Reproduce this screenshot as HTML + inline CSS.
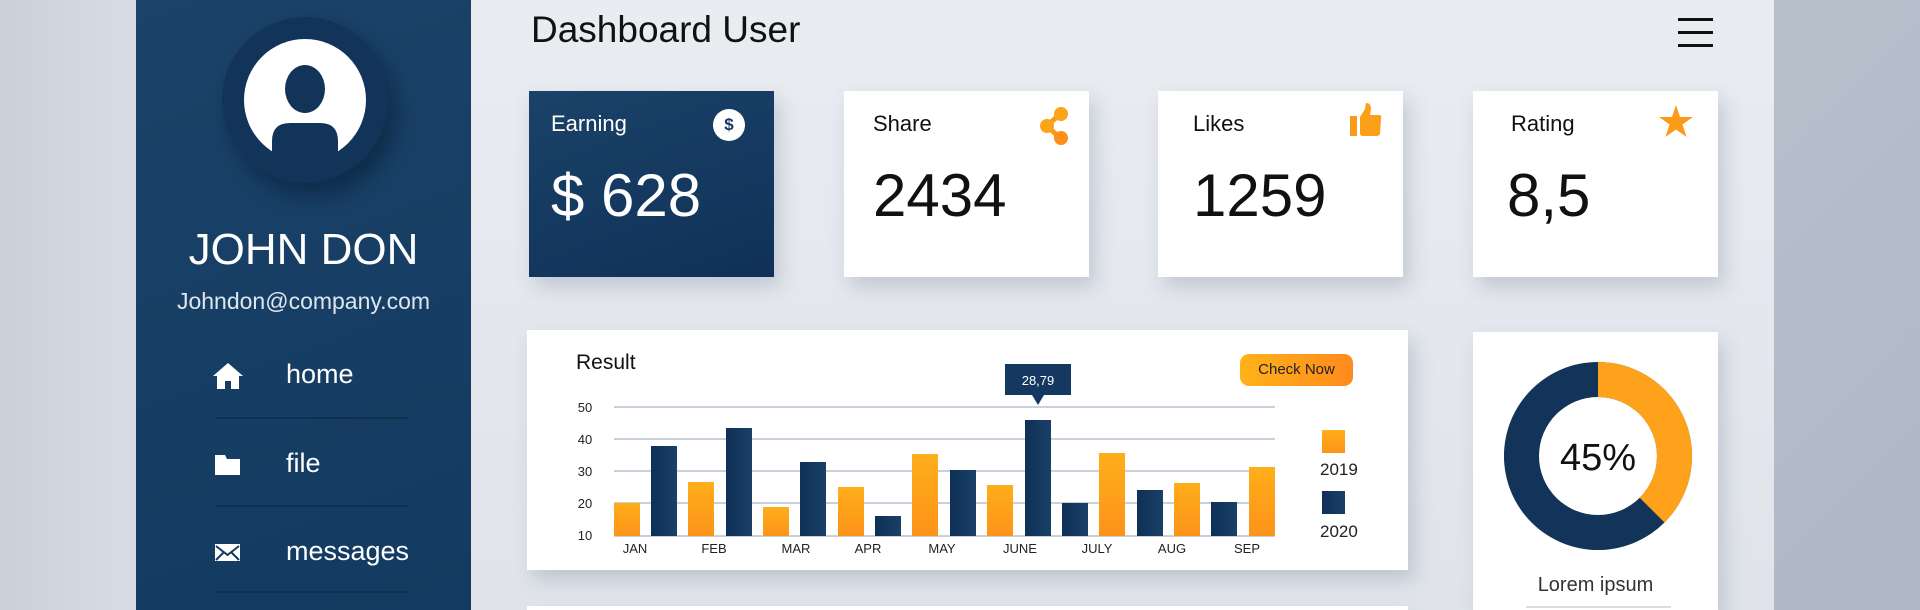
<!DOCTYPE html>
<html style="width:1920px;height:610px;overflow:hidden"><head><meta charset="utf-8"><style>
*{margin:0;padding:0;box-sizing:border-box}
body{width:1920px;height:610px;overflow:hidden;position:relative;background:#e6e9ef;font-family:"Liberation Sans",sans-serif;}
.a{position:absolute}
.card{position:absolute;background:#fff;box-shadow:6px 10px 18px rgba(90,105,130,.25)}
.lbl{position:absolute;font-size:22px;color:#111}
.num{position:absolute;font-size:60px;color:#111;line-height:1}
.nav{position:absolute;left:286px;font-size:27px;color:#fff;line-height:1}
.sep{position:absolute;left:215px;width:193px;height:2px;background:#10304f}
</style></head><body>
<div class="a" style="left:0;top:0;width:136px;height:610px;background:linear-gradient(90deg,#c9d0da,#d8dde5)"></div>
<div class="a" style="left:1774px;top:0;width:146px;height:610px;background:linear-gradient(135deg,#b7bfcb,#aeb8c6)"></div>
<div class="a" style="left:471px;top:0;width:1303px;height:610px;background:linear-gradient(180deg,#e9ecf1,#e0e4ea)"></div>
<!-- sidebar -->
<div class="a" style="left:136px;top:0;width:335px;height:610px;background:linear-gradient(160deg,#1b4268,#133a60)"></div>
<div class="a" style="left:222px;top:17px;width:166px;height:166px;border-radius:50%;background:#133459;box-shadow:8px 12px 20px rgba(5,20,40,.45)"></div>
<svg class="a" style="left:244px;top:39px" width="122" height="122" viewBox="0 0 122 122">
<circle cx="61" cy="61" r="61" fill="#fff"/>
<ellipse cx="61" cy="50" rx="20" ry="24" fill="#133459"/>
<path d="M28 122 V102 Q28 84 46 84 H76 Q94 84 94 102 V122 Z" fill="#133459"/>
</svg>
<div class="a" style="left:136px;width:335px;top:228px;text-align:center;color:#fff;font-size:44px;line-height:1">JOHN DON</div>
<div class="a" style="left:136px;width:335px;top:290px;text-align:center;color:#dfe6ee;font-size:23px;line-height:1">Johndon@company.com</div>
<svg class="a" style="left:212px;top:362px" width="32" height="28" viewBox="0 0 32 28"><path d="M16 1 L31 14 H27 V27 H19 V19 H13 V27 H5 V14 H1 Z" fill="#fff"/></svg>
<div class="nav" style="top:361px">home</div>
<div class="sep" style="top:417px"></div>
<svg class="a" style="left:215px;top:455px" width="25" height="20" viewBox="0 0 25 20"><path d="M0 0 H10 L12 4 H25 V20 H0 Z" fill="#fff"/></svg>
<div class="nav" style="top:450px">file</div>
<div class="sep" style="top:505px"></div>
<svg class="a" style="left:215px;top:544px" width="25" height="17" viewBox="0 0 25 17"><rect width="25" height="17" fill="#fff"/><path d="M1 2 L12.5 11 L24 2 M1 16 L9 8 M24 16 L16 8" stroke="#133a60" stroke-width="2" fill="none"/></svg>
<div class="nav" style="top:538px">messages</div>
<div class="sep" style="top:591px"></div>
<!-- header -->
<div class="a" style="left:531px;top:10px;font-size:37px;color:#111;line-height:1.1">Dashboard User</div>
<div class="a" style="left:1678px;top:18px;width:35px;height:3px;background:#111"></div>
<div class="a" style="left:1678px;top:31px;width:35px;height:3px;background:#111"></div>
<div class="a" style="left:1678px;top:44px;width:35px;height:3px;background:#111"></div>
<!-- cards -->
<div class="card" style="left:529px;top:91px;width:245px;height:186px;background:linear-gradient(160deg,#1b4268,#0f3158)"></div>
<div class="lbl" style="left:551px;top:111px;color:#fff">Earning</div>
<div class="a" style="left:713px;top:109px;width:32px;height:32px;border-radius:50%;background:#fff;color:#133a60;font-size:17px;font-weight:bold;text-align:center;line-height:32px">$</div>
<div class="num" style="left:551px;top:166px;color:#fff">$ 628</div>
<div class="card" style="left:844px;top:91px;width:245px;height:186px"></div>
<div class="lbl" style="left:873px;top:111px">Share</div>
<svg class="a" style="left:1040px;top:106px" width="30" height="40" viewBox="0 0 30 40"><path d="M20 8 L7 20 L20 32" stroke="#fb9a1a" stroke-width="5" fill="none"/><circle cx="21" cy="8" r="7" fill="#fda51a"/><circle cx="7" cy="20" r="7" fill="#fca31a"/><circle cx="21" cy="32" r="7" fill="#fb8f1a"/></svg>
<div class="num" style="left:873px;top:166px">2434</div>
<div class="card" style="left:1158px;top:91px;width:245px;height:186px"></div>
<div class="lbl" style="left:1193px;top:111px">Likes</div>
<svg class="a" style="left:1350px;top:103px" width="32" height="34" viewBox="0 0 32 34"><rect x="0" y="13" width="7" height="20" fill="#fb9a1a"/><path d="M10 14 L15 6 L16 0 Q21 0 21 6 L20 12 H29 Q32 12 31 16 L30 31 Q29 33 26 33 H13 Q10 33 10 30 Z" fill="#fca01a"/></svg>
<div class="num" style="left:1193px;top:166px">1259</div>
<div class="card" style="left:1473px;top:91px;width:245px;height:186px"></div>
<div class="lbl" style="left:1511px;top:111px">Rating</div>
<svg class="a" style="left:1659px;top:105px" width="34" height="33" viewBox="0 0 34 33"><path d="M17 0 L21 12 H34 L23.5 19.5 L27.5 32 L17 24.5 L6.5 32 L10.5 19.5 L0 12 H13 Z" fill="#fc9a1a"/></svg>
<div class="num" style="left:1507px;top:166px">8,5</div>
<!-- chart card -->
<div class="card" style="left:527px;top:330px;width:881px;height:240px"></div>
<div class="card" style="left:527px;top:606px;width:881px;height:4px"></div>
<div class="a" style="left:576px;top:351px;font-size:21px;color:#111">Result</div>
<div class="a" style="left:1240px;top:354px;width:113px;height:32px;border-radius:9px;background:linear-gradient(90deg,#ffb21a,#ff8a1c);font-size:15px;color:#222;text-align:center;line-height:32px">Check Now</div>
<svg class="a" style="left:527px;top:330px" width="881" height="240" viewBox="527 330 881 240">
<g stroke="#c8d0dc" stroke-width="2">
<line x1="614" y1="407" x2="1275" y2="407"/><line x1="614" y1="439" x2="1275" y2="439"/><line x1="614" y1="471" x2="1275" y2="471"/><line x1="614" y1="503" x2="1275" y2="503"/><line x1="614" y1="536" x2="1275" y2="536"/>
</g>
<g font-family="Liberation Sans, sans-serif" font-size="13" fill="#222" text-anchor="middle">
<text x="585" y="412">50</text><text x="585" y="444">40</text><text x="585" y="476">30</text><text x="585" y="508">20</text><text x="585" y="540">10</text>
<text x="635" y="553">JAN</text><text x="714" y="553">FEB</text><text x="796" y="553">MAR</text><text x="868" y="553">APR</text><text x="942" y="553">MAY</text><text x="1020" y="553">JUNE</text><text x="1097" y="553">JULY</text><text x="1172" y="553">AUG</text><text x="1247" y="553">SEP</text>
</g>
<defs><linearGradient id="o" x1="0" y1="0" x2="0" y2="1"><stop offset="0" stop-color="#ffae1a"/><stop offset="1" stop-color="#fd931a"/></linearGradient>
<linearGradient id="n" x1="0" y1="0" x2="1" y2="0"><stop offset="0" stop-color="#0f3056"/><stop offset="1" stop-color="#1a4068"/></linearGradient></defs>
<g>
<rect x="614" y="503" width="26" height="33" fill="url(#o)"/>
<rect x="651" y="446" width="26" height="90" fill="url(#n)"/>
<rect x="688" y="482" width="26" height="54" fill="url(#o)"/>
<rect x="726" y="428" width="26" height="108" fill="url(#n)"/>
<rect x="763" y="507" width="26" height="29" fill="url(#o)"/>
<rect x="800" y="462" width="26" height="74" fill="url(#n)"/>
<rect x="838" y="487" width="26" height="49" fill="url(#o)"/>
<rect x="875" y="516" width="26" height="20" fill="url(#n)"/>
<rect x="912" y="454" width="26" height="82" fill="url(#o)"/>
<rect x="950" y="470" width="26" height="66" fill="url(#n)"/>
<rect x="987" y="485" width="26" height="51" fill="url(#o)"/>
<rect x="1025" y="420" width="26" height="116" fill="url(#n)"/>
<rect x="1062" y="503" width="26" height="33" fill="url(#n)"/>
<rect x="1099" y="453" width="26" height="83" fill="url(#o)"/>
<rect x="1137" y="490" width="26" height="46" fill="url(#n)"/>
<rect x="1174" y="483" width="26" height="53" fill="url(#o)"/>
<rect x="1211" y="502" width="26" height="34" fill="url(#n)"/>
<rect x="1249" y="467" width="26" height="69" fill="url(#o)"/>
</g>
<path d="M1005 364 H1071 V395 H1044 L1038 405 L1032 395 H1005 Z" fill="#143860"/>
<text x="1038" y="385" font-family="Liberation Sans, sans-serif" font-size="13" fill="#fff" text-anchor="middle">28,79</text>
<rect x="1322" y="430" width="23" height="23" fill="url(#o)"/>
<rect x="1322" y="491" width="23" height="23" fill="url(#n)"/>
<g font-family="Liberation Sans, sans-serif" font-size="17" fill="#222"><text x="1320" y="475">2019</text><text x="1320" y="537">2020</text></g>
</svg>
<!-- donut card -->
<div class="card" style="left:1473px;top:332px;width:245px;height:278px"></div>
<svg class="a" style="left:1500px;top:358px" width="196" height="196" viewBox="-98 -98 196 196">
<path d="M0 -94 A94 94 0 1 1 0 94 A94 94 0 1 1 0 -94 Z M0 -59 A59 59 0 1 0 0 59 A59 59 0 1 0 0 -59 Z" fill="#123459" fill-rule="evenodd"/>
<path d="M0 -94 A94 94 0 0 1 66.5 66.5 L41.7 41.7 A59 59 0 0 0 0 -59 Z" fill="#fda21a"/>
<text x="0" y="14" text-anchor="middle" font-family="Liberation Sans, sans-serif" font-size="38" fill="#111">45%</text>
</svg>
<div class="a" style="left:1473px;width:245px;top:574px;text-align:center;font-size:20px;color:#333">Lorem ipsum</div>
<div class="a" style="left:1526px;top:606px;width:145px;height:2px;background:#d8dee6"></div>
</body></html>
